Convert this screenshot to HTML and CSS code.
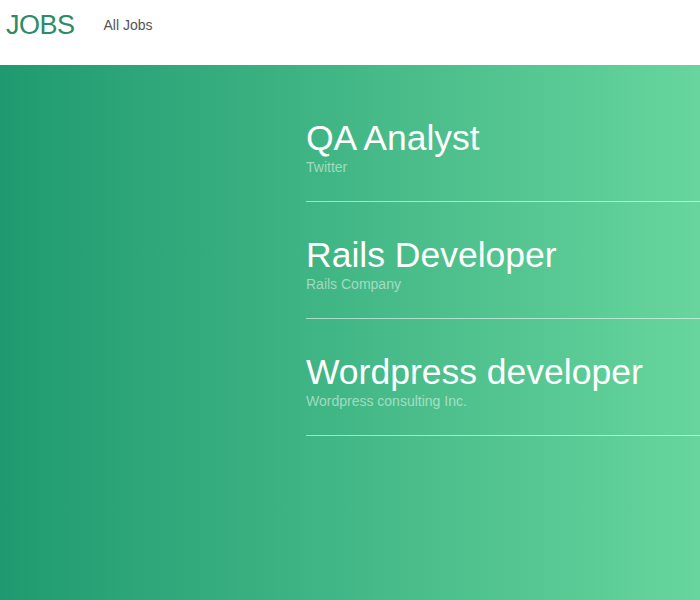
FILE: index.html
```html
<!DOCTYPE html>
<html>
<head>
<meta charset="utf-8">
<link rel="stylesheet" href="styles.css">
</head>
<body>
<header class="topbar">
  <a class="brand" href="#">JOBS</a>
  <nav class="nav"><a href="#">All Jobs</a></nav>
</header>
<main class="hero">
  <ul class="jobs">
    <li class="job">
      <h2 class="job-title">QA Analyst</h2>
      <p class="job-company">Twitter</p>
    </li>
    <li class="job">
      <h2 class="job-title">Rails Developer</h2>
      <p class="job-company">Rails Company</p>
    </li>
    <li class="job">
      <h2 class="job-title">Wordpress developer</h2>
      <p class="job-company">Wordpress consulting Inc.</p>
    </li>
  </ul>
</main>
</body>
</html>
```
FILE: styles.css
```css
* { box-sizing: border-box; }
html, body { margin: 0; padding: 0; height: 100%; }
body {
  font-family: "Liberation Sans", Arial, Helvetica, sans-serif;
  background: #fff;
  display: flex;
  flex-direction: column;
}
.topbar {
  height: 65px;
  display: flex;
  align-items: flex-start;
  padding: 8px 0 0 6px;
}
.brand {
  color: #2a8c68;
  text-decoration: none;
  font-size: 27px;
  line-height: 34px;
  letter-spacing: -0.5px;
}
.nav { margin-left: 29px; padding-top: 8px; }
.nav a {
  color: #555;
  text-decoration: none;
  font-size: 14px;
  line-height: 18px;
}
.hero {
  flex: 1;
  background: linear-gradient(to right, #1f9a70 0%, #67d59d 100%);
  padding: 20px 0 0 306px;
}
.jobs { list-style: none; margin: 0; padding: 0; }
.job {
  border-bottom: 1px solid rgba(255, 255, 255, 0.55);
  height: 117px;
  padding-top: 32px;
}
.job-title {
  margin: 0;
  color: #fff;
  font-weight: normal;
  font-size: 35.5px;
  line-height: 42px;
}
.job-company {
  margin: 0;
  color: rgba(255, 255, 255, 0.5);
  font-size: 14px;
  line-height: 16px;
}
```
